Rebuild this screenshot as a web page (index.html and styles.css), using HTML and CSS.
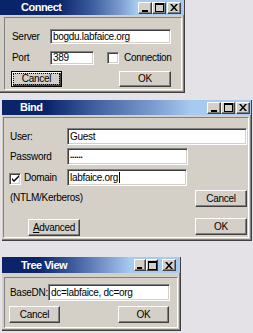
FILE: index.html
```html
<!DOCTYPE html>
<html>
<head>
<meta charset="utf-8">
<link rel="stylesheet" href="styles.css">
</head>
<body>
<div class="win connect">
  <div class="titlebar tb-connect">
    <span class="title">Connect</span>
    <div class="tbtns">
      <span class="tbtn"><svg width="8" height="8" viewBox="0 0 8 8"><rect x="1" y="6" width="6" height="2" fill="#000"/></svg></span>
      <span class="tbtn"><svg width="9" height="9" viewBox="0 0 9 9"><rect x="0.5" y="0.5" width="8" height="8" fill="none" stroke="#000"/><rect x="0" y="0" width="9" height="2" fill="#000"/></svg></span>
      <span class="tbtn close"><svg width="8" height="7" viewBox="0 0 8 7"><path d="M0 0h2l2 2.5 2-2.5h2l-3 3.5 3 3.5h-2l-2-2.5-2 2.5h-2l3-3.5z" fill="#000"/></svg></span>
    </div>
  </div>
  <div class="frame">
    <div class="row c-row1">
      <span class="label c-label">Server</span>
      <div class="field c-server">bogdu.labfaice.org</div>
    </div>
    <div class="row c-row2">
      <span class="label c-label">Port</span>
      <div class="field c-port">389</div>
      <span class="check c-check"></span>
      <span class="label c-connlabel">Connection</span>
    </div>
    <div class="row c-row3">
      <div class="btn default c-cancel"><span class="focus">Cancel</span></div>
      <div class="btn c-ok">OK</div>
    </div>
  </div>
</div>

<div class="win bind">
  <div class="titlebar tb-bind">
    <span class="title">Bind</span>
    <div class="tbtns">
      <span class="tbtn"><svg width="8" height="8" viewBox="0 0 8 8"><rect x="1" y="6" width="6" height="2" fill="#000"/></svg></span>
      <span class="tbtn"><svg width="9" height="9" viewBox="0 0 9 9"><rect x="0.5" y="0.5" width="8" height="8" fill="none" stroke="#000"/><rect x="0" y="0" width="9" height="2" fill="#000"/></svg></span>
      <span class="tbtn close"><svg width="8" height="7" viewBox="0 0 8 7"><path d="M0 0h2l2 2.5 2-2.5h2l-3 3.5 3 3.5h-2l-2-2.5-2 2.5h-2l3-3.5z" fill="#000"/></svg></span>
    </div>
  </div>
  <div class="frame b-frame">
    <div class="row b-row1">
      <span class="label b-label">User:</span>
      <div class="field b-user">Guest</div>
    </div>
    <div class="row b-row2">
      <span class="label b-label">Password</span>
      <div class="field b-pass"><span class="dots">••••••</span></div>
    </div>
    <div class="row b-row3">
      <span class="check checked b-check"><svg width="7" height="7" viewBox="0 0 7 7"><path d="M0 3l2 2 5-5v2l-5 5-2-2z" fill="#000"/></svg></span>
      <span class="label b-domlabel">Domain</span>
      <div class="field b-dom">labfaice.org<span class="caret"></span></div>
    </div>
    <div class="b-lower">
      <div class="b-left">
        <span class="label b-ntlm">(NTLM/Kerberos)</span>
        <div class="btn b-adv"><span><u>A</u>dvanced</span></div>
      </div>
      <div class="b-right">
        <div class="btn b-cancel">Cancel</div>
        <div class="btn b-ok">OK</div>
      </div>
    </div>
  </div>
</div>

<div class="win tree">
  <div class="titlebar tb-tree">
    <span class="title">Tree View</span>
    <div class="tbtns">
      <span class="tbtn small"><svg width="8" height="8" viewBox="0 0 8 8"><rect x="1" y="6" width="5" height="2" fill="#000"/></svg></span>
      <span class="tbtn small"><svg width="9" height="9" viewBox="0 0 9 9"><rect x="0.5" y="0.5" width="8" height="8" fill="none" stroke="#000"/><rect x="0" y="0" width="9" height="2" fill="#000"/></svg></span>
      <span class="tbtn small close"><svg width="8" height="7" viewBox="0 0 8 7"><path d="M0 0h2l2 2.5 2-2.5h2l-3 3.5 3 3.5h-2l-2-2.5-2 2.5h-2l3-3.5z" fill="#000"/></svg></span>
    </div>
  </div>
  <div class="frame t-frame">
    <div class="row t-row1">
      <span class="label t-label">BaseDN:</span>
      <div class="field t-base">dc=labfaice, dc=org</div>
    </div>
    <div class="row t-row2">
      <div class="btn t-cancel">Cancel</div>
      <div class="btn t-ok">OK</div>
    </div>
  </div>
</div>
</body>
</html>
```
FILE: styles.css
```css
* { box-sizing: border-box; }
html, body { margin: 0; padding: 0; }
body {
  background: #e4e2e7;
  width: 253px;
  height: 333px;
  overflow: hidden;
  display: flex;
  flex-direction: column;
  align-items: flex-start;
  font-family: "Liberation Sans", Arial, sans-serif;
  font-size: 10px;
  letter-spacing: -0.3px;
  color: #000;
}

.win {
  background: #d4d0c8;
  border-right: 1px solid #404040;
  border-bottom: 1px solid #404040;
  box-shadow: inset -1px -1px #808080;
  display: flex;
  flex-direction: column;
}
.connect { width: 185px; height: 93px; }
.bind { width: 250px; height: 141px; margin-top: 7px; margin-left: 2px; }
.tree { width: 179px; height: 74px; margin-top: 16px; margin-left: 2px; }

.titlebar {
  height: 15px;
  flex: none;
  display: flex;
  align-items: center;
  justify-content: space-between;
}
.tb-connect {
  background: linear-gradient(90deg, #0a246a 0, #0a246a 32%, #3d5c9c 50%, #7f9fd2 66%, #a6caf0 74%, #a6caf0 100%);
  padding-left: 21px;
  padding-right: 3px;
}
.tb-bind {
  background: linear-gradient(90deg, #0a246a 0, #0a246a 18%, #3d5c9c 36%, #7f9fd2 62%, #a6caf0 76%, #a6caf0 100%);
  padding-left: 18px;
  padding-right: 1px;
}
.tb-tree {
  height: 16px;
  background: linear-gradient(90deg, #0a246a 0, #0a246a 20%, #3d5c9c 40%, #7f9fd2 60%, #a6caf0 72%, #a6caf0 100%);
  padding-left: 19px;
  padding-right: 4px;
}
.title {
  color: #fff;
  font-weight: bold;
  font-size: 11px;
  letter-spacing: -0.5px;
  line-height: 13px;
}
.tbtns { display: flex; align-items: center; }
.tbtn {
  width: 14px;
  height: 12px;
  background: #d4d0c8;
  border: 1px solid;
  border-color: #fff #404040 #404040 #fff;
  box-shadow: inset -1px -1px #808080;
  display: flex;
  align-items: center;
  justify-content: center;
}
.tbtn.close { margin-left: 1px; }
.tbtn.small { width: 12px; }
.tbtn.small.close { margin-left: 4px; width: 14px; }

.frame {
  flex: 1;
  margin: 2px 2px 2px 4px;
  border: 1px solid;
  border-color: #808080 #fff #fff #808080;
  display: flex;
  flex-direction: column;
}
.b-frame { margin-left: 1px; }
.t-frame { margin-top: 4px; margin-left: 2px; }

.row { display: flex; align-items: center; flex: none; }
.label { white-space: nowrap; line-height: 12px; }

.field {
  background: #fff;
  border: 1px solid;
  border-color: #808080 #fff #fff #808080;
  box-shadow: inset 1px 1px #404040, inset -1px -1px #d4d0c8;
  padding-left: 2px;
  display: flex;
  align-items: center;
  overflow: hidden;
  white-space: nowrap;
  line-height: 12px;
}
.check {
  width: 12px;
  height: 12px;
  background: #fff;
  border: 1px solid;
  border-color: #808080 #fff #fff #808080;
  box-shadow: inset 1px 1px #404040, inset -1px -1px #d4d0c8;
  display: flex;
  align-items: center;
  justify-content: center;
  flex: none;
}
.btn {
  background: #d4d0c8;
  border: 1px solid;
  border-color: #fff #404040 #404040 #fff;
  box-shadow: inset -1px -1px #808080;
  display: flex;
  align-items: center;
  justify-content: center;
  white-space: nowrap;
  line-height: 12px;
  flex: none;
}
.btn.default {
  border-color: #000;
  box-shadow: inset 1px 1px #fff, inset -1px -1px #404040, inset -2px -2px #808080;
}
.focus {
  border: 1px dotted #000;
  padding: 0 8px;
  line-height: 10px;
}

/* Connect */
.c-row1 { margin-top: 11px; padding-left: 7px; height: 15px; }
.c-label { width: 38px; }
.c-server { width: 121px; height: 15px; }
.c-row2 { margin-top: 7px; padding-left: 7px; height: 14px; }
.c-port { width: 44px; height: 14px; }
.c-check { margin-left: 13px; }
.c-connlabel { margin-left: 5px; }
.c-row3 { margin-top: 6px; height: 16px; }
.c-cancel { margin-left: 6px; width: 51px; height: 16px; }
.c-ok { margin-left: 57px; width: 52px; height: 16px; }

/* Bind */
.b-row1 { margin-top: 10px; padding-left: 6px; height: 17px; }
.b-label { width: 57px; }
.b-user { width: 180px; height: 17px; }
.b-row2 { margin-top: 3px; padding-left: 6px; height: 17px; }
.b-pass { width: 121px; height: 17px; }
.dots { font-size: 6px; letter-spacing: 0; }
.b-row3 { margin-top: 4px; padding-left: 5px; height: 17px; }
.b-check { margin-top: 2px; }
.b-domlabel { margin-left: 3px; width: 43px; }
.b-dom { width: 120px; height: 17px; }
.caret { width: 1px; height: 11px; background: #000; margin-left: 1px; }
.b-lower { display: flex; padding-left: 6px; }
.b-left { width: 185px; display: flex; flex-direction: column; align-items: flex-start; }
.b-ntlm { margin-top: 6px; }
.b-adv { margin-top: 15px; margin-left: 18px; width: 52px; height: 17px; }
.b-right { display: flex; flex-direction: column; }
.b-cancel { margin-top: 4px; width: 52px; height: 17px; }
.b-ok { margin-top: 11px; width: 52px; height: 17px; }

/* Tree */
.t-row1 { margin-top: 6px; padding-left: 5px; height: 17px; }
.t-label { width: 38px; }
.t-base { width: 122px; height: 17px; }
.t-row2 { margin-top: 5px; padding-left: 4px; height: 17px; }
.t-cancel { width: 51px; height: 17px; }
.t-ok { margin-left: 58px; width: 51px; height: 17px; }
```
